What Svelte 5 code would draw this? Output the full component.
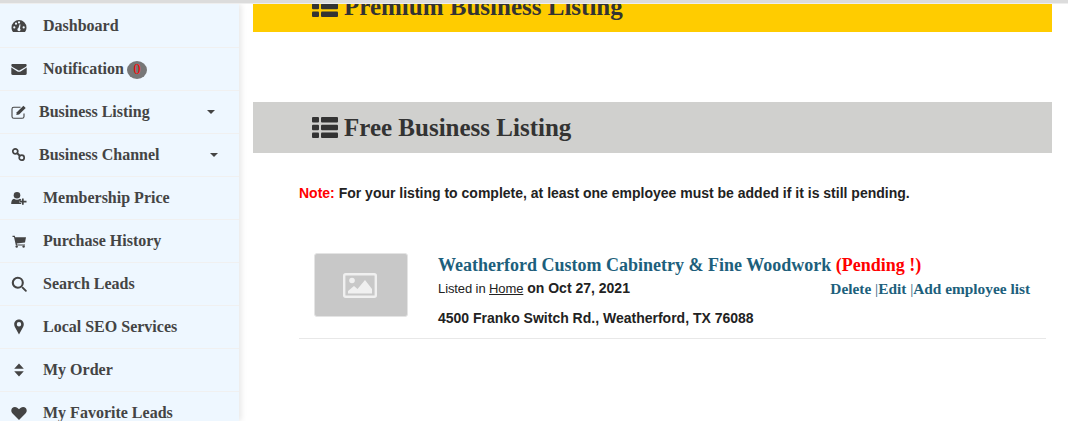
<script>
    // sidebar entries, icon is the inner svg markup on a 16 unit box
    const menu = [
        { label: 'Dashboard', icon: 'dash' },
        { label: 'Notification', icon: 'mail', badge: '0' },
        { label: 'Business Listing', icon: 'edit', caret: true },
        { label: 'Business Channel', icon: 'chain', caret: true, wideCaret: true },
        { label: 'Membership Price', icon: 'userplus' },
        { label: 'Purchase History', icon: 'cart' },
        { label: 'Search Leads', icon: 'search' },
        { label: 'Local SEO Services', icon: 'pin' },
        { label: 'My Order', icon: 'sort' },
        { label: 'My Favorite Leads', icon: 'heart' }
    ];
</script>

{#snippet listIcon()}
    <svg class="list-icon" viewBox="0 0 26 21" fill="#333">
        <rect x="0" y="0" width="7" height="5.5" rx="1" />
        <rect x="0" y="7.7" width="7" height="5.5" rx="1" />
        <rect x="0" y="15.4" width="7" height="5.5" rx="1" />
        <rect x="9" y="0" width="17" height="5.5" rx="1" />
        <rect x="9" y="7.7" width="17" height="5.5" rx="1" />
        <rect x="9" y="15.4" width="17" height="5.5" rx="1" />
    </svg>
{/snippet}

{#snippet menuIcon(name)}
    <svg class="menu-icon" viewBox="0 0 16 16" fill="#444">
        {#if name === 'dash'}
            <path fill-rule="evenodd" d="M8 2a7.5 7.5 0 0 0-7.5 7.5c0 1.700.6 3.200 1.500 4.500h12c.9-1.300 1.500-2.800 1.500-4.500A7.500 7.500 0 0 0 8 2zM3.300 10.500a1.100 1.100 0 1 1 0-2.200 1.100 1.100 0 0 1 0 2.200zM5 6.800a1.100 1.100 0 1 1 0-2.200 1.100 1.100 0 0 1 0 2.200zM8 5.500a1.100 1.100 0 1 1 0-2.200 1.100 1.100 0 0 1 0 2.200zM9.300 12.500a1.600 1.600 0 0 1-2.900-1c0-.6.400-1.200 1-1.400l1.200-3.900.9.200-.5 4a1.600 1.600 0 0 1 .3 2.100zM12.700 10.500a1.100 1.100 0 1 1 0-2.200 1.100 1.100 0 0 1 0 2.200z" />
        {:else if name === 'mail'}
            <path d="M.3 4.200C.3 3.500.9 3 1.600 3h12.800c.7 0 1.300.5 1.300 1.200 0 .7-.5 1.300-1.100 1.700L8.800 9.300c-.5.300-1.100.3-1.600 0L1.400 5.900C.8 5.500.3 4.900.3 4.200z" />
            <path d="M.3 6.500v6.300c0 .7.600 1.200 1.300 1.200h12.800c.7 0 1.300-.5 1.300-1.200V6.500l-5.700 3.700c-1.200.7-2.800.7-4 0z" />
        {:else if name === 'edit'}
            <path fill="none" stroke="#444" stroke-width="1.100" d="M13 9.500v2.900c0 1-.8 1.800-1.800 1.800H2.800c-1 0-1.800-.8-1.800-1.800V5c0-1 .8-1.800 1.800-1.800h6.700" />
            <path d="M5.800 8.300l6.600-6.600 2.300 2.300-6.600 6.600-2.800.5z" />
        {:else if name === 'chain'}
            <g fill="none" stroke="#444" stroke-width="1.700">
                <circle cx="4.300" cy="4.300" r="2.500" />
                <circle cx="10.700" cy="10.700" r="2.500" />
                <path d="M6 6l3 3" stroke-width="2" />
            </g>
        {:else if name === 'userplus'}
            <circle cx="6" cy="5.200" r="3.300" />
            <path d="M.2 14c0-3 1-4.900 2.900-5.200.8.600 1.800 1 2.900 1s2.100-.4 2.900-1c.5.100.9.300 1.300.6v1.300H8.600v2.400h1.600V14z" />
            <path d="M11 8.600h1.700v2.200H15.500v1.700h-2.800v2.200H11v-2.200H8.800v-1.700H11z" />
        {:else if name === 'cart'}
            <path d="M1.500 2.800h2.300l.4 1.500H15l-1 5.200-8.200.9.200 1h8v1.200H4.900L3 4H1.500z" />
            <circle cx="5.700" cy="13.600" r="1.200" />
            <circle cx="12.600" cy="13.600" r="1.200" />
        {:else if name === 'search'}
            <circle cx="6.800" cy="6.800" r="5" fill="none" stroke="#444" stroke-width="2.100" />
            <path d="M10.400 11.800l1.400-1.400 3.800 3.800a1 1 0 0 1-1.400 1.400z" />
        {:else if name === 'pin'}
            <path fill-rule="evenodd" d="M8 .5C5 .5 3.200 2.700 3.200 5.300c0 1 .3 1.800.7 2.600L8 15.500l4.100-7.600c.4-.8.700-1.600.7-2.600C12.800 2.700 11 .5 8 .5zm0 7a2.200 2.200 0 1 1 0-4.400 2.200 2.200 0 0 1 0 4.400z" />
        {:else if name === 'sort'}
            <path d="M8 1.500l4.800 5.200H3.200zM8 14.500L3.200 9.300h9.600z" />
        {:else if name === 'heart'}
            <path d="M8 15L1.800 8.800C.9 7.900.3 6.900.3 5.600.3 3.400 1.800 2 3.900 2 5.500 2 7 3 8 4.300 9 3 10.500 2 12.100 2c2.100 0 3.600 1.400 3.600 3.600 0 1.300-.6 2.300-1.500 3.200z" />
        {/if}
    </svg>
{/snippet}

<div class="topline"></div>
<div class="page">
    <aside class="sidebar">
        {#each menu as item}
            <div class="menu-item" class:has-caret={item.caret}>
                {@render menuIcon(item.icon)}
                <span class="menu-label">{item.label}</span>
                {#if item.badge}
                    <span class="badge">{item.badge}</span>
                {/if}
                {#if item.caret}
                    <span class="caret" class:wide={item.wideCaret}></span>
                {/if}
            </div>
        {/each}
    </aside>

    <main class="content">
        <div class="band premium">
            {@render listIcon()}
            <h2>Premium Business Listing</h2>
        </div>
        <div class="band free">
            {@render listIcon()}
            <h2>Free Business Listing</h2>
        </div>

        <p class="note"><span class="note-label">Note:</span> For your listing to complete, at least one employee must be added if it is still pending.</p>

        <div class="listing">
            <div class="thumb">
                <svg viewBox="0 0 34 25" width="34" height="25" fill="none">
                    <rect x="1.200" y="1.200" width="31.600" height="22.600" rx="1.500" stroke="#f0f0f0" stroke-width="2.400" />
                    <circle cx="9" cy="7.500" r="2.800" fill="#f0f0f0" />
                    <path d="M5 20.500v-2.500l6-5 3.500 3 7.500-9 7 9v4.500z" fill="#f0f0f0" />
                </svg>
            </div>
            <div class="details">
                <div class="title">Weatherford Custom Cabinetry &amp; Fine Woodwork <span class="pending">(Pending !)</span></div>
                <div class="meta-row">
                    <div class="meta"><span class="listed">Listed in <u>Home</u></span> on Oct 27, 2021</div>
                    <div class="actions">Delete <i>|</i>Edit <i>|</i>Add employee list</div>
                </div>
                <div class="address">4500 Franko Switch Rd., Weatherford, TX 76088</div>
            </div>
        </div>
    </main>
</div>

<style>
    :global(body) {
        margin: 0;
        background: #fff;
        overflow: hidden;
    }

    .topline {
        height: 3px;
        background: #dcdcdc;
        border-bottom: 1px solid #eeeeee;
    }

    .page {
        display: flex;
        height: 417px;
        overflow: hidden;
    }

    .sidebar {
        width: 239px;
        flex-shrink: 0;
        padding-top: 1px;
        background: #eef7ff;
        box-shadow: 2px 0 6px rgba(0, 0, 0, 0.1);
        font-family: "Liberation Serif", serif;
    }

    .menu-item {
        display: flex;
        align-items: center;
        height: 42px;
        border-bottom: 1px solid #f0f0f0;
        padding-left: 11px;
        color: #444;
        font-size: 16px;
        font-weight: bold;
    }

    .menu-icon {
        width: 16px;
        height: 16px;
        flex-shrink: 0;
        margin-right: 16px;
    }

    .has-caret .menu-icon {
        margin-right: 12px;
    }

    .badge {
        margin-left: 3px;
        margin-top: 2px;
        width: 20px;
        height: 18px;
        border-radius: 50%;
        background: #777;
        color: #f00;
        font-size: 14px;
        font-weight: normal;
        text-align: center;
        line-height: 18px;
    }

    .caret {
        width: 0;
        height: 0;
        margin-left: auto;
        margin-right: 24px;
        border-top: 4px solid #444;
        border-left: 4px solid transparent;
        border-right: 4px solid transparent;
    }

    .caret.wide {
        margin-right: 21px;
    }

    .content {
        flex: 1;
        min-width: 0;
        padding: 0 16px 0 14px;
        font-family: "Liberation Sans", sans-serif;
        color: #222;
    }

    .band {
        display: flex;
        align-items: center;
        gap: 6px;
        height: 51px;
        padding-left: 59px;
    }

    .band h2 {
        margin: 0;
        font-family: "Liberation Serif", serif;
        font-size: 25px;
        font-weight: bold;
        color: #333;
    }

    .premium {
        background: #ffcc00;
        margin-top: -23px;
        margin-bottom: 70px;
    }

    .free {
        background: #d0d0ce;
    }

    .list-icon {
        width: 26px;
        height: 21px;
    }

    .note {
        margin: 31px 0 0 46px;
        font-size: 14px;
        line-height: 18px;
        font-weight: bold;
    }

    .note-label {
        color: #f00;
    }

    .listing {
        display: flex;
        margin: 51px 6px 0 46px;
        padding: 0 16px 11px 15px;
        border-bottom: 1px solid #e8e8e8;
    }

    .thumb {
        width: 92px;
        height: 62px;
        flex-shrink: 0;
        display: flex;
        align-items: center;
        justify-content: center;
        background: #c8c8c8;
        border: 1px solid #e4e4e4;
        border-radius: 3px;
        margin-right: 30px;
    }

    .thumb svg {
        margin-right: 2px;
        filter: blur(0.4px);
    }

    .details {
        flex: 1;
        min-width: 0;
    }

    .title {
        font-family: "Liberation Serif", serif;
        font-size: 18px;
        line-height: 24px;
        font-weight: bold;
        color: #1d5f7c;
    }

    .pending {
        color: #f00;
    }

    .meta-row {
        display: flex;
        justify-content: space-between;
        margin-top: 2px;
    }

    .meta {
        font-size: 14px;
        line-height: 18px;
        font-weight: bold;
    }

    .listed {
        font-size: 13px;
        font-weight: normal;
        letter-spacing: -0.1px;
    }

    .actions {
        margin-top: 1px;
        font-family: "Liberation Serif", serif;
        font-size: 15.35px;
        font-weight: bold;
        line-height: 18px;
        color: #1d5f7c;
    }

    .actions i {
        font-style: normal;
        font-weight: normal;
    }

    .address {
        margin-top: 11px;
        font-size: 14px;
        line-height: 18px;
        font-weight: bold;
    }
</style>
